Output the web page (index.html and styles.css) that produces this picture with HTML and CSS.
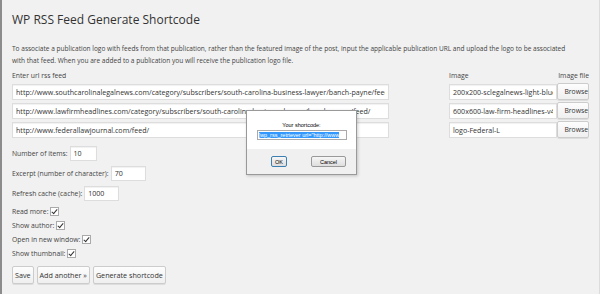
FILE: index.html
```html
<!DOCTYPE html>
<html lang="en">
<head>
  <meta charset="UTF-8" />
  <title>WP RSS Feed Generate Shortcode</title>
  <link rel="stylesheet" href="styles.css">
</head>
<body>
  <div class="wrap">
    <h1>WP RSS Feed Generate Shortcode</h1>

    <p class="intro">To associate a publication logo with feeds from that publication, rather than the featured image of the post, input the applicable publication URL and upload the logo to be associated<br>with that feed. When you are added to a publication you will receive the publication logo file.</p>

    <div class="feeds">
      <span class="head">Enter url rss feed</span>
      <span class="head col-img">Image</span>
      <span class="head col-file">Image file</span>

      <input class="field" type="text" value="http://www.southcarolinalegalnews.com/category/subscribers/south-carolina-business-lawyer/banch-payne/feed/">
      <input class="field col-img" type="text" value="200x200-sclegalnews-light-blue">
      <button class="btn col-file">Browse</button>

      <input class="field" type="text" value="http://www.lawfirmheadlines.com/category/subscribers/south-carolina-business-lawyer/banch-payne/feed/">
      <input class="field col-img" type="text" value="600x600-law-firm-headlines-v4">
      <button class="btn col-file">Browse</button>

      <input class="field" type="text" value="http://www.federallawjournal.com/feed/">
      <input class="field col-img" type="text" value="logo-Federal-L">
      <button class="btn col-file">Browse</button>
    </div>

    <div class="options">
      <label class="opt">Number of items: <input class="field num" type="text" value="10"></label>
      <label class="opt">Excerpt (number of character): <input class="field num wide" type="text" value="70"></label>
      <label class="opt">Refresh cache (cache): <input class="field num wide" type="text" value="1000"></label>
      <label class="opt check-row">Read more: <span class="check"></span></label>
      <label class="opt check-row">Show author: <span class="check"></span></label>
      <label class="opt check-row">Open in new window: <span class="check"></span></label>
      <label class="opt check-row">Show thumbnail: <span class="check"></span></label>
    </div>

    <div class="actions">
      <button class="btn">Save</button>
      <button class="btn">Add another &raquo;</button>
      <button class="btn">Generate shortcode</button>
    </div>
  </div>

  <div class="dialog">
    <div class="dialog-body">
      <div class="dialog-label">Your shortcode:</div>
      <div class="dialog-input"><span class="sel">[wp_rss_retriever url="http://www</span></div>
    </div>
    <div class="dialog-foot">
      <button class="dbtn ok">OK</button>
      <button class="dbtn cancel">Cancel</button>
    </div>
  </div>
</body>
</html>
```

FILE: styles.css
```css
html, body {
  height: 100%;
}
body {
  margin: 0;
  background-color: #f1f1f1;
  font-family: "Open Sans", sans-serif;
  color: #444;
  border-left: 2px solid #8c8c8c;
  border-right: 1px solid #dcdcdc;
  box-sizing: border-box;
  position: relative;
}
.wrap {
  padding: 12px 10px 0 10px;
}
h1 {
  font-size: 12px;
  font-weight: 400;
  color: #333;
  margin: 0 0 15px 0;
  line-height: 16px;
}
.intro {
  font-size: 6.55px;
  line-height: 12px;
  white-space: nowrap;
  margin: 0 0 4px 0;
  color: #444;
}
.feeds {
  display: grid;
  grid-template-columns: 377px 60px 108px 32px;
  row-gap: 2px;
  align-items: center;
}
.head {
  font-size: 6.8px;
  line-height: 10px;
}
.col-img {
  grid-column: 3;
}
.col-file {
  grid-column: 4;
  text-align: right;
}
.field {
  font-family: "Open Sans", sans-serif;
  font-size: 7.1px;
  color: #333;
  height: 16px;
  box-sizing: border-box;
  border: 1px solid #ddd;
  background: #fff;
  padding: 0 3px;
  margin: 0;
  box-shadow: inset 0 1px 1px rgba(0,0,0,0.06);
  outline: none;
  min-width: 0;
}
.btn {
  font-family: "Open Sans", sans-serif;
  font-size: 6.8px;
  color: #333;
  height: 17px;
  padding: 0 3px;
  margin: 0;
  border: 1px solid #ccc;
  border-radius: 2px;
  background: linear-gradient(#fdfdfd, #efefef);
  box-shadow: 0 1px 0 #ddd;
}
.feeds .btn {
  width: 32px;
  padding: 0;
}
.options {
  margin-top: 7px;
  display: flex;
  flex-direction: column;
  align-items: flex-start;
  gap: 4px;
}
.opt {
  font-size: 6.8px;
  height: 16px;
  display: flex;
  align-items: center;
  gap: 2px;
}
.num {
  width: 27px;
  height: 15px;
}
.num.wide {
  width: 35px;
}
.check-row {
  height: 10px;
}
.opt.check-row:nth-child(4) {
  margin-top: 1px;
}
.check {
  width: 7px;
  height: 7px;
  border: 1px solid #aaa;
  background: #fff;
  position: relative;
}
.check::after {
  content: "";
  position: absolute;
  left: 2px;
  top: 0;
  width: 2px;
  height: 5px;
  border-right: 1px solid #333;
  border-bottom: 1px solid #333;
  transform: rotate(40deg);
}
.actions {
  margin-top: 8px;
  display: flex;
  gap: 3px;
}
.actions .btn {
  font-size: 7.2px;
  height: 18px;
  padding: 0 2px;
}
.dialog {
  position: absolute;
  left: 244px;
  top: 110px;
  width: 109px;
  height: 63px;
  border: 1px solid #999;
  background: #f0f0f0;
  box-shadow: 1px 1px 3px rgba(0,0,0,0.2);
  font-family: "Liberation Sans", sans-serif;
  display: flex;
  flex-direction: column;
}
.dialog-body {
  background: #fff;
  height: 38px;
  display: flex;
  flex-direction: column;
  align-items: center;
  padding-top: 10px;
  box-sizing: border-box;
}
.dialog-label {
  font-size: 5.5px;
  color: #000;
  line-height: 8px;
}
.dialog-input {
  margin-top: 1px;
  width: 90px;
  height: 10px;
  border: 1px solid #aaa;
  box-sizing: border-box;
  overflow: hidden;
  white-space: nowrap;
  font-size: 5.5px;
  line-height: 8px;
  padding: 0 1px;
}
.sel {
  background: #3399ff;
  color: #fff;
}
.dialog-foot {
  flex: 1;
  display: flex;
  align-items: center;
  padding-left: 24px;
  gap: 24px;
}
.dbtn {
  font-family: "Liberation Sans", sans-serif;
  font-size: 5.5px;
  height: 11px;
  padding: 0;
  border: 1px solid #999;
  border-radius: 2px;
  background: linear-gradient(#f6f6f6, #dedede);
  color: #000;
}
.dbtn.ok {
  width: 16px;
  border-color: #3c7fb1;
}
.dbtn.cancel {
  width: 35px;
}
```
